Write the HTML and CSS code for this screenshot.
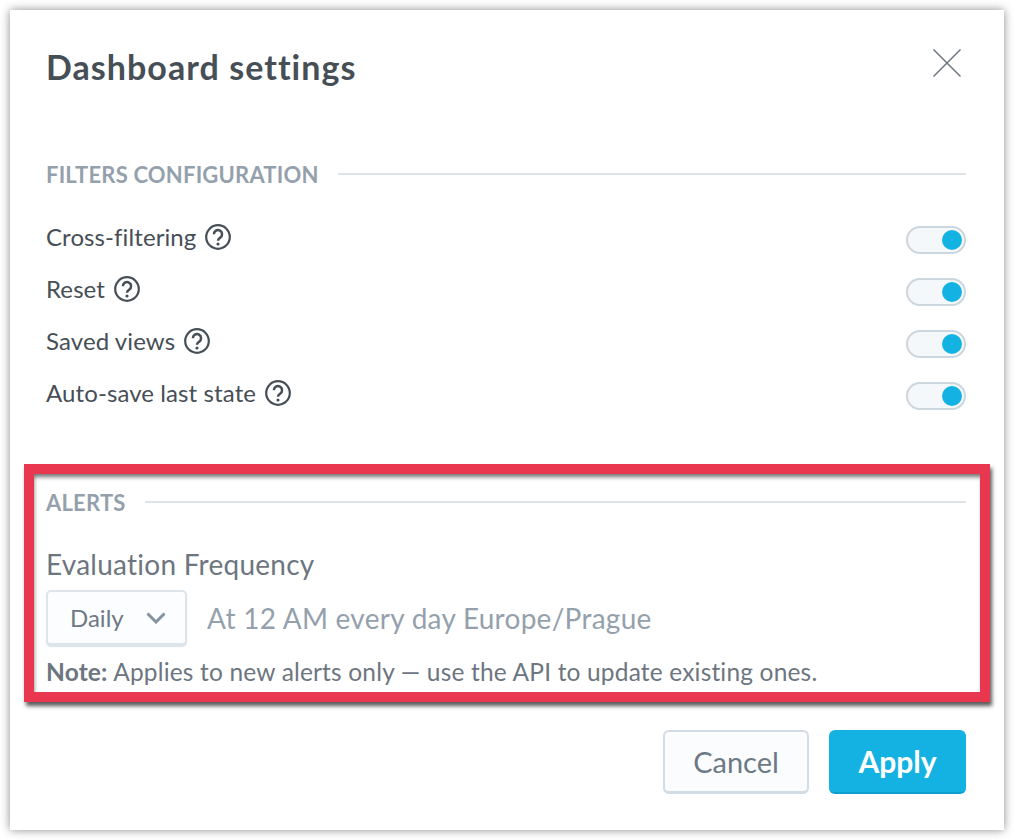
FILE: index.html
```html
<!DOCTYPE html>
<html lang="en">
<head>
<meta charset="utf-8">
<title>Dashboard settings</title>
<link rel="stylesheet" href="styles.css">
</head>
<body>
<div class="dialog">
  <header class="head">
    <h1 class="title">Dashboard settings</h1>
    <svg class="close" width="30" height="30" viewBox="0 0 30 30"><path d="M1.500 1.500 28.500 28.500M28.500 1.500 1.500 28.500" fill="none" stroke="#6d7680" stroke-width="1.500"/></svg>
  </header>
  <section class="filters">
    <div class="section-head"><span class="section-label">FILTERS CONFIGURATION</span><span class="rule"></span></div>
    <div class="rows">
      <div class="row"><span class="row-label">Cross-filtering</span><svg class="help" width="26" height="26" viewBox="0 0 26 26"><circle cx="13" cy="13" r="11.800" fill="none" stroke="#464e56" stroke-width="2.200"/><path d="M8.900 10.200a4.100 4.100 0 1 1 6.300 3.400c-1.500.9-2.200 1.500-2.200 3.200" fill="none" stroke="#464e56" stroke-width="2.500"/><circle cx="13" cy="20" r="1.600" fill="#464e56"/></svg><span class="toggle"><span class="knob"></span></span></div>
      <div class="row"><span class="row-label">Reset</span><svg class="help" width="26" height="26" viewBox="0 0 26 26"><circle cx="13" cy="13" r="11.800" fill="none" stroke="#464e56" stroke-width="2.200"/><path d="M8.900 10.200a4.100 4.100 0 1 1 6.300 3.400c-1.500.9-2.200 1.500-2.200 3.200" fill="none" stroke="#464e56" stroke-width="2.500"/><circle cx="13" cy="20" r="1.600" fill="#464e56"/></svg><span class="toggle"><span class="knob"></span></span></div>
      <div class="row"><span class="row-label">Saved views</span><svg class="help" width="26" height="26" viewBox="0 0 26 26"><circle cx="13" cy="13" r="11.800" fill="none" stroke="#464e56" stroke-width="2.200"/><path d="M8.900 10.200a4.100 4.100 0 1 1 6.300 3.400c-1.500.9-2.200 1.500-2.200 3.200" fill="none" stroke="#464e56" stroke-width="2.500"/><circle cx="13" cy="20" r="1.600" fill="#464e56"/></svg><span class="toggle"><span class="knob"></span></span></div>
      <div class="row"><span class="row-label">Auto-save last state</span><svg class="help" width="26" height="26" viewBox="0 0 26 26"><circle cx="13" cy="13" r="11.800" fill="none" stroke="#464e56" stroke-width="2.200"/><path d="M8.900 10.200a4.100 4.100 0 1 1 6.300 3.400c-1.500.9-2.200 1.500-2.200 3.200" fill="none" stroke="#464e56" stroke-width="2.500"/><circle cx="13" cy="20" r="1.600" fill="#464e56"/></svg><span class="toggle"><span class="knob"></span></span></div>
    </div>
  </section>
  <section class="alerts">
    <div class="section-head"><span class="section-label">ALERTS</span><span class="rule"></span></div>
    <div class="freq-title">Evaluation Frequency</div>
    <div class="freq-row">
      <div class="select"><span>Daily</span><svg width="20" height="12" viewBox="0 0 20 12"><path d="M1.500 1.500 10 10l8.500-8.500" fill="none" stroke="#8593a0" stroke-width="3"/></svg></div>
      <span class="schedule">At 12 AM every day Europe/Prague</span>
    </div>
    <p class="note"><b>Note:</b> Applies to new alerts only — use the API to update existing ones.</p>
  </section>
  <footer class="foot">
    <button class="btn cancel" type="button">Cancel</button>
    <button class="btn apply" type="button">Apply</button>
  </footer>
  <div class="highlight"></div>
</div>
</body>
</html>
```
FILE: styles.css
```css
* { box-sizing: border-box; }
html, body { margin: 0; height: 840px; background: #fff; overflow: hidden; }
body { padding: 10px; font-family: Lato, "Open Sans", sans-serif; color: #464e56; }
.dialog { position: relative; width: 994px; height: 820px; background: #fff; box-shadow: 0 0 9px rgba(0,0,0,.45); padding: 0 38px 0 36px; }
.head { display: flex; justify-content: space-between; align-items: flex-start; height: 152px; }
.title { margin: 35px 0 0; font-size: 34px; line-height: 44px; font-weight: 700; letter-spacing: 1.05px; color: #464e56; }
.close { margin: 38px 4px 0 0; }
.section-head { display: flex; align-items: center; gap: 19px; height: 24px; }
.section-label { font-size: 22px; font-weight: 700; letter-spacing: .2px; color: #94a1ad; white-space: nowrap; }
.rule { flex: 1; height: 2px; background: #dde4ea; }
.rows { margin-top: 27px; }
.row { display: flex; align-items: center; height: 52px; gap: 9px; font-size: 24px; letter-spacing: .1px; }
.row-label { line-height: 52px; position: relative; top: -2px; }
.help { position: relative; top: -2px; }
.toggle { margin-left: auto; width: 60px; height: 28px; margin-top: 2px; border: 2px solid #ccd6de; border-radius: 14px; background: #f5f8fa; display: flex; align-items: center; justify-content: flex-end; padding-right: 2px; }
.knob { width: 20px; height: 20px; border-radius: 50%; background: #14b2e2; }
.alerts { margin-top: 69px; }
.freq-title { margin-top: 32px; font-size: 28px; line-height: 36px; letter-spacing: .25px; color: #6d7680; }
.freq-row { display: flex; align-items: center; gap: 20px; margin-top: 8px; }
.select { width: 141px; height: 56px; border: 2px solid #dde4ea; border-bottom-width: 3px; border-radius: 5px; background: #fcfdfe; display: flex; align-items: center; gap: 22px; padding-left: 22px; font-size: 24px; color: #6d7985; box-shadow: 0 1px 1px rgba(180,195,205,.5); }
.schedule { font-size: 28px; letter-spacing: .27px; color: #94a1ad; }
.note { margin: 9px 0 0; font-size: 24.500px; line-height: 34px; letter-spacing: .17px; color: #6d7680; }
.foot { display: flex; justify-content: flex-end; gap: 20px; margin-top: 41px; }
.btn { height: 64px; border-radius: 6px; font-family: inherit; font-size: 29px; padding: 0; }
.cancel { width: 146px; border: 2px solid #d1dce4; border-bottom-width: 3px; background: #fbfcfd; color: #6d7985; }
.apply { width: 137px; border: 0; border-bottom: 2px solid #0f9fcf; background: #14b2e2; color: #fff; font-weight: 700; font-size: 30px; }
.highlight { position: absolute; left: 14px; top: 454px; width: 966px; height: 238px; border: 10px solid #e93750; box-shadow: 2px 4px 4px rgba(0,0,0,.65), inset 1px 4px 4px -1px rgba(0,0,0,.55); }
```
